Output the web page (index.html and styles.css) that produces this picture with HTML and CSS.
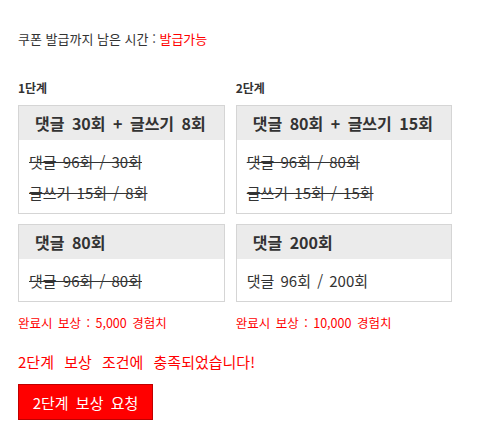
FILE: index.html
```html
<!DOCTYPE html>
<html lang="ko">
<head>
<meta charset="utf-8">
<link rel="stylesheet" href="styles.css">
</head>
<body>
<div class="page">
  <p class="timer">쿠폰 발급까지 남은 시간 : <span class="red">발급가능</span></p>
  <div class="stages">
    <div class="stage">
      <div class="stage-title">1단계</div>
      <div class="box">
        <div class="box-head">댓글 30회 + 글쓰기 8회</div>
        <div class="box-body">
          <div class="line done">댓글 96회 / 30회</div>
          <div class="line done">글쓰기 15회 / 8회</div>
        </div>
      </div>
      <div class="box">
        <div class="box-head">댓글 80회</div>
        <div class="box-body">
          <div class="line done">댓글 96회 / 80회</div>
        </div>
      </div>
      <p class="reward">완료시 보상 : 5,000 경험치</p>
    </div>
    <div class="stage">
      <div class="stage-title">2단계</div>
      <div class="box">
        <div class="box-head">댓글 80회 + 글쓰기 15회</div>
        <div class="box-body">
          <div class="line done">댓글 96회 / 80회</div>
          <div class="line done">글쓰기 15회 / 15회</div>
        </div>
      </div>
      <div class="box">
        <div class="box-head">댓글 200회</div>
        <div class="box-body">
          <div class="line">댓글 96회 / 200회</div>
        </div>
      </div>
      <p class="reward">완료시 보상 : 10,000 경험치</p>
    </div>
  </div>
  <p class="notice">2단계 보상 조건에 충족되었습니다!</p>
  <button class="request" type="button">2단계 보상 요청</button>
</div>
</body>
</html>
```
FILE: styles.css
```css
html, body {
  margin: 0;
  padding: 0;
  background: #fff;
}
body {
  font-family: "Noto Sans CJK KR", "Noto Sans", sans-serif;
  color: #333;
}
.page {
  padding: 30px 18px 0 18px;
}
.timer {
  margin: 0;
  font-size: 13px;
  line-height: 18px;
  word-spacing: 0;
}
.red {
  color: #ff0000;
}
.stages {
  display: flex;
  align-items: flex-start;
  gap: 11px;
  margin-top: 32px;
}
.stage {
  display: flex;
  flex-direction: column;
}
.stage-title {
  font-size: 12px;
  font-weight: bold;
  line-height: 16px;
  height: 25px;
}
.box {
  border: 1px solid #d5d5d5;
  margin-bottom: 10px;
}
.box-head {
  background: #ebebeb;
  font-size: 16px;
  font-weight: bold;
  line-height: 34px;
  padding: 0 18px 0 16px;
  word-spacing: 3px;
  white-space: nowrap;
}
.box-body {
  padding: 6px 10px 5px 10px;
}
.line {
  font-size: 15px;
  line-height: 31px;
  word-spacing: 2px;
  white-space: nowrap;
}
.done {
  text-decoration: line-through;
}
.reward {
  margin: 2px 0 0 0;
  font-size: 12.5px;
  line-height: 18px;
  color: #ff0000;
  word-spacing: 2px;
  white-space: nowrap;
}
.notice {
  margin: 20px 0 0 0;
  font-size: 15px;
  line-height: 20px;
  color: #ff0000;
  word-spacing: 6px;
}
.request {
  display: block;
  margin-top: 12px;
  width: 135px;
  height: 36px;
  background: #ff0000;
  border: 1px solid #c00000;
  color: #fff;
  font-family: inherit;
  font-size: 15px;
  word-spacing: 3px;
  padding: 0;
  cursor: pointer;
}
```
